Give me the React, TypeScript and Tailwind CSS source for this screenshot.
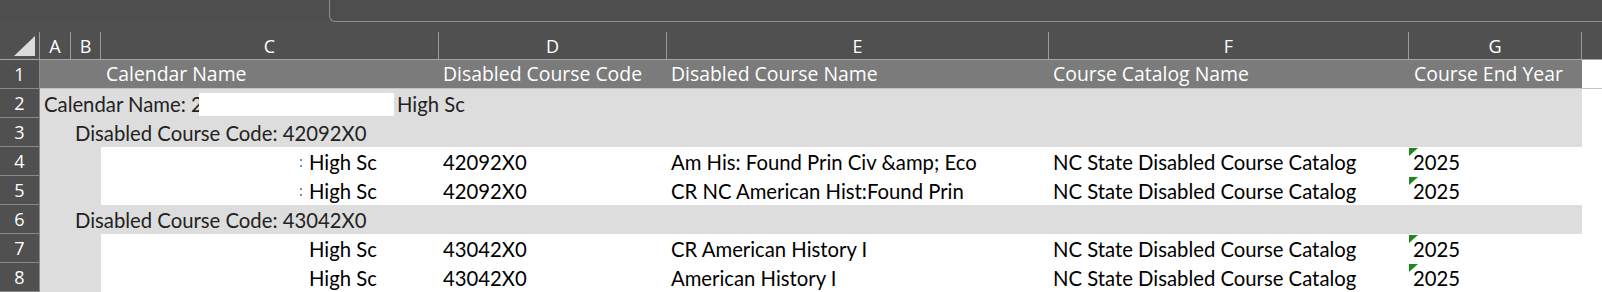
import React from 'react';

const COLS = [
  { letter: 'A', w: 'w-[31px]' },
  { letter: 'B', w: 'w-[30px]' },
  { letter: 'C', w: 'w-[338px]' },
  { letter: 'D', w: 'w-[228px]' },
  { letter: 'E', w: 'w-[382px]' },
  { letter: 'F', w: 'w-[360px]' },
  { letter: 'G', w: 'w-[173px]' },
];

const UI = "[font-family:'Open_Sans',sans-serif]";
const CELL = "[font-family:Lato,sans-serif] text-[20.3px] leading-[24px]";

type Course = { code: string; name: string; mark?: boolean };

const groups: { code: string; rows: Course[] }[] = [
  {
    code: '42092X0',
    rows: [
      { code: '42092X0', name: 'Am His: Found Prin Civ &amp; Eco', mark: true },
      { code: '42092X0', name: 'CR NC American Hist:Found Prin', mark: true },
    ],
  },
  {
    code: '43042X0',
    rows: [
      { code: '43042X0', name: 'CR American History I' },
      { code: '43042X0', name: 'American History I' },
    ],
  },
];

const RowNum: React.FC<{ n: number }> = ({ n }) => (
  <div className={`w-[40px] shrink-0 h-[29px] bg-[#505050] border-r border-b border-[#8a8a8a] flex items-center justify-center text-white text-[18px] leading-[24px] ${UI}`}>
    {n}
  </div>
);

const GroupRow: React.FC<{ n: number; children: React.ReactNode; indent: string }> = ({ n, children, indent }) => (
  <div className="flex h-[29px]">
    <RowNum n={n} />
    <div className={`w-[1542px] shrink-0 bg-[#dddddd] flex items-center whitespace-nowrap text-[#222] ${indent} ${CELL}`}>
      {children}
    </div>
    <div className="flex-1 bg-white" />
  </div>
);

const DataRow: React.FC<{ n: number; course: Course }> = ({ n, course }) => (
  <div className="flex h-[29px]">
    <RowNum n={n} />
    <div className="w-[61px] shrink-0 bg-[#dddddd]" />
    <div className={`flex items-center bg-white text-black whitespace-nowrap ${CELL}`}>
      <div className="w-[338px] flex items-center pl-[199px]">
        {/* sliver of a redacted colon */}
        <span className="w-[2px] h-[8px] mt-[2px] flex flex-col justify-between">
          {course.mark && (
            <>
              <span className="h-[2px] bg-[#5b9bd5]" />
              <span className="h-[2px] bg-[#5b9bd5]" />
            </>
          )}
        </span>
        <span className="ml-[7px]">High Sc</span>
      </div>
      <div className="w-[228px] pl-[4px]">{course.code}</div>
      <div className="w-[382px] pl-[4px]">{course.name}</div>
      <div className="w-[360px] pl-[4px]">NC State Disabled Course Catalog</div>
      <div className="w-[173px] h-[29px] relative flex items-center pl-[4px]">
        <svg className="absolute left-0 top-[1px]" width="10" height="8" viewBox="0 0 10 8">
          <polygon points="0,0 9,0 0,8" fill="#1b8a1b" />
        </svg>
        2025
      </div>
    </div>
    <div className="flex-1 bg-white" />
  </div>
);

export default function App() {
  let n = 2;
  return (
    <div className="w-[1602px] h-[292px] overflow-hidden bg-[#4e4e4e] flex flex-col">
      {/* formula bar strip */}
      <div className="h-[22px] flex shrink-0">
        <div className="w-[329px] shrink-0" />
        <div className="flex-1 h-[22px] border-l border-b border-[#8e8e8e] rounded-bl-[6px]" />
      </div>

      {/* column letters */}
      <div className={`h-[38px] shrink-0 flex bg-[#505050] border-b border-[#a2a2a2] text-white text-[18px] leading-[24px] ${UI}`}>
        <div className="w-[40px] shrink-0 pt-[10px] flex">
          <div className="flex-1 border-r border-[#9a9a9a] flex items-end justify-end pr-[3px] pb-[3px]">
            <svg width="22" height="20" viewBox="0 0 22 20">
              <polygon points="0,20 21,20 21,0" fill="#dcdcdc" />
            </svg>
          </div>
        </div>
        {COLS.map((c) => (
          <div key={c.letter} className={`${c.w} shrink-0 pt-[10px] flex`}>
            <div className="flex-1 border-r border-[#9a9a9a] flex items-center justify-center">{c.letter}</div>
          </div>
        ))}
        <div className="flex-1" />
      </div>

      {/* header row */}
      <div className="flex h-[29px]">
        <RowNum n={1} />
        <div className={`flex flex-1 border-b border-[#c4c4c4] text-white whitespace-nowrap text-[19.4px] leading-[26px] ${UI}`}>
          <div className="w-[61px] bg-[#7b7b7b]" />
          <div className="w-[338px] bg-[#7b7b7b] flex items-center pl-[5px]">Calendar Name</div>
          <div className="w-[228px] bg-[#7b7b7b] flex items-center pl-[4px]">Disabled Course Code</div>
          <div className="w-[382px] bg-[#7b7b7b] flex items-center pl-[4px]">Disabled Course Name</div>
          <div className="w-[360px] bg-[#7b7b7b] flex items-center pl-[4px]">Course Catalog Name</div>
          <div className="w-[173px] bg-[#7b7b7b] flex items-center pl-[5px]">Course End Year</div>
          <div className="flex-1 bg-white" />
        </div>
      </div>

      <GroupRow n={n++} indent="pl-[4px]">
        <span className="w-[155px] shrink-0">Calendar Name: 2</span>
        {/* redaction block over the rest of the calendar name */}
        <span className="relative w-[195px] h-[23px] shrink-0 mt-[1px] bg-white" />
        <span className="ml-[3px]">High Sc</span>
      </GroupRow>

      {groups.map((g) => (
        <React.Fragment key={g.code}>
          <GroupRow n={n++} indent="pl-[35px]">
            Disabled Course Code: {g.code}
          </GroupRow>
          {g.rows.map((r, i) => (
            <DataRow key={i} n={n++} course={r} />
          ))}
        </React.Fragment>
      ))}
    </div>
  );
}
